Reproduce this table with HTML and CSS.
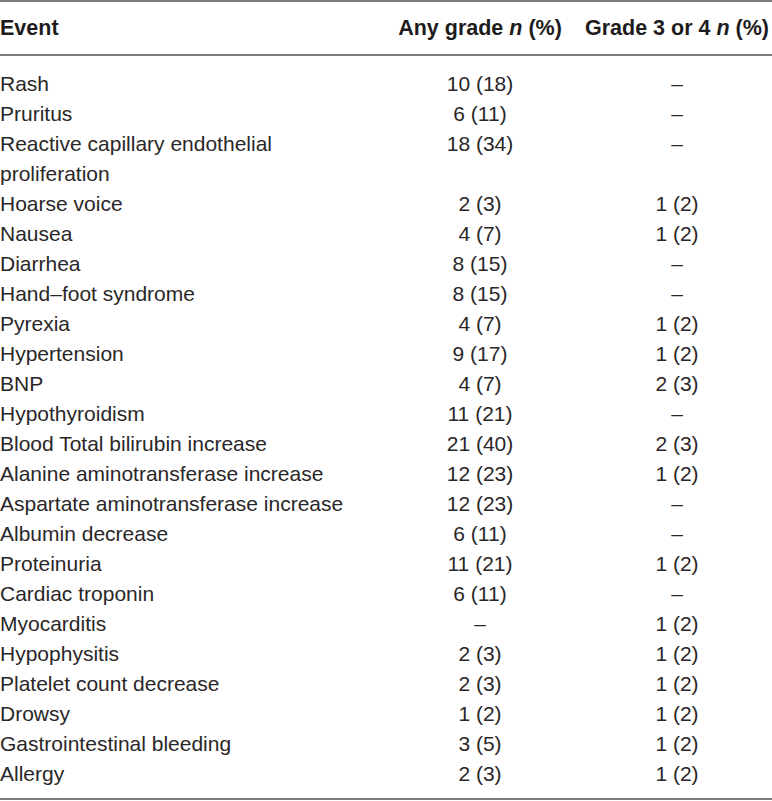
FILE: index.html
```html
<!DOCTYPE html>
<html lang="en">
<head>
<meta charset="utf-8">
<title>Adverse events</title>
<link rel="stylesheet" href="styles.css">
</head>
<body>
<table class="ae-table">
  <colgroup>
    <col class="col-event">
    <col class="col-any">
    <col class="col-grade">
  </colgroup>
  <thead>
    <tr>
      <th class="event">Event</th>
      <th class="num">Any grade <i>n</i> (%)</th>
      <th class="num">Grade 3 or 4 <i>n</i> (%)</th>
    </tr>
  </thead>
  <tbody>
    <tr class="first"><td>Rash</td><td class="num">10 (18)</td><td class="num">–</td></tr>
    <tr><td>Pruritus</td><td class="num">6 (11)</td><td class="num">–</td></tr>
    <tr><td>Reactive capillary endothelial proliferation</td><td class="num">18 (34)</td><td class="num">–</td></tr>
    <tr><td>Hoarse voice</td><td class="num">2 (3)</td><td class="num">1 (2)</td></tr>
    <tr><td>Nausea</td><td class="num">4 (7)</td><td class="num">1 (2)</td></tr>
    <tr><td>Diarrhea</td><td class="num">8 (15)</td><td class="num">–</td></tr>
    <tr><td>Hand–foot syndrome</td><td class="num">8 (15)</td><td class="num">–</td></tr>
    <tr><td>Pyrexia</td><td class="num">4 (7)</td><td class="num">1 (2)</td></tr>
    <tr><td>Hypertension</td><td class="num">9 (17)</td><td class="num">1 (2)</td></tr>
    <tr><td>BNP</td><td class="num">4 (7)</td><td class="num">2 (3)</td></tr>
    <tr><td>Hypothyroidism</td><td class="num">11 (21)</td><td class="num">–</td></tr>
    <tr><td>Blood Total bilirubin increase</td><td class="num">21 (40)</td><td class="num">2 (3)</td></tr>
    <tr><td>Alanine aminotransferase increase</td><td class="num">12 (23)</td><td class="num">1 (2)</td></tr>
    <tr><td>Aspartate aminotransferase increase</td><td class="num">12 (23)</td><td class="num">–</td></tr>
    <tr><td>Albumin decrease</td><td class="num">6 (11)</td><td class="num">–</td></tr>
    <tr><td>Proteinuria</td><td class="num">11 (21)</td><td class="num">1 (2)</td></tr>
    <tr><td>Cardiac troponin</td><td class="num">6 (11)</td><td class="num">–</td></tr>
    <tr><td>Myocarditis</td><td class="num">–</td><td class="num">1 (2)</td></tr>
    <tr><td>Hypophysitis</td><td class="num">2 (3)</td><td class="num">1 (2)</td></tr>
    <tr><td>Platelet count decrease</td><td class="num">2 (3)</td><td class="num">1 (2)</td></tr>
    <tr><td>Drowsy</td><td class="num">1 (2)</td><td class="num">1 (2)</td></tr>
    <tr><td>Gastrointestinal bleeding</td><td class="num">3 (5)</td><td class="num">1 (2)</td></tr>
    <tr class="last"><td>Allergy</td><td class="num">2 (3)</td><td class="num">1 (2)</td></tr>
  </tbody>
</table>
</body>
</html>
```
FILE: styles.css
```css
html, body {
  margin: 0;
  padding: 0;
  background: #ffffff;
}

body {
  font-family: "Liberation Sans", Arial, Helvetica, sans-serif;
  color: #2a2728;
}

.ae-table {
  width: 772px;
  border-collapse: collapse;
  table-layout: fixed;
  border-top: 2px solid #7d7d7d;
  border-bottom: 2px solid #7d7d7d;
  font-size: 21px;
  line-height: 30px;
}

.col-event { width: 378px; }
.col-any { width: 204px; }
.col-grade { width: 190px; }

.ae-table th {
  font-weight: bold;
  font-size: 21.5px;
  color: #1e1b1c;
  padding: 11px 0;
  border-bottom: 2px solid #7d7d7d;
  white-space: nowrap;
}

.ae-table th.event {
  text-align: left;
}

.ae-table td {
  padding: 0;
  vertical-align: top;
  text-align: left;
}

.ae-table .num {
  text-align: center;
}

.ae-table tr.first td {
  padding-top: 13px;
}

.ae-table tr.last td {
  padding-bottom: 9px;
}
```
